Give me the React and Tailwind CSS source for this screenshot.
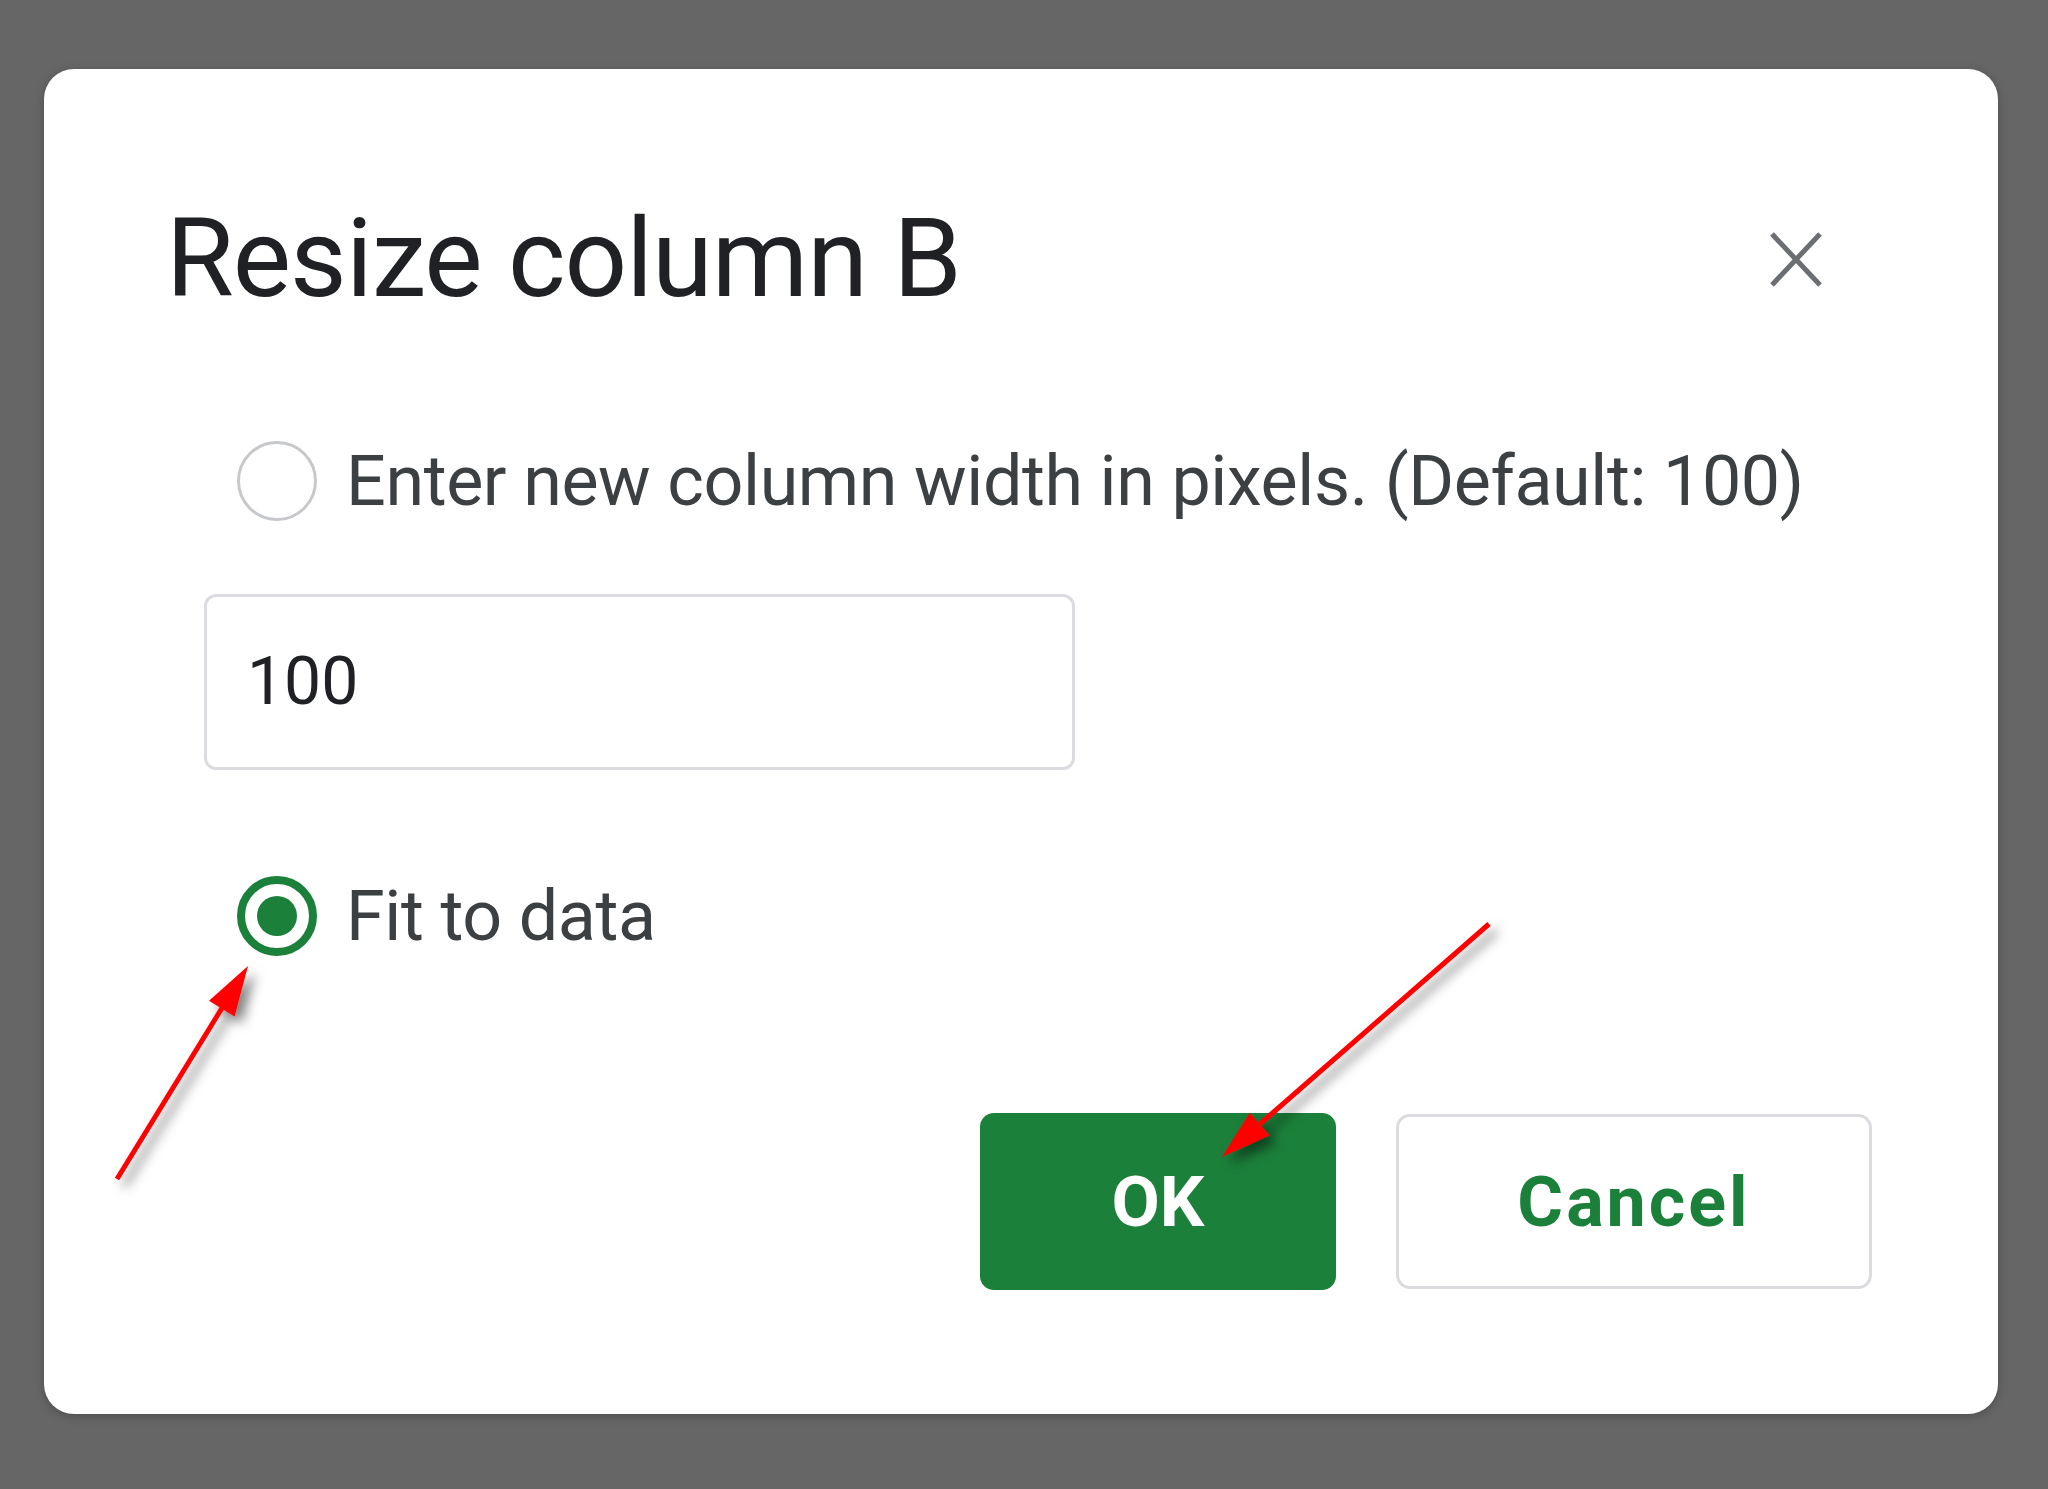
import React from "react";

function Arrows() {
  return (
    <svg
      className="absolute left-0 top-0 pointer-events-none"
      width="2048"
      height="1489"
      viewBox="0 0 2048 1489"
    >
      <defs>
        <filter id="sh" x="-20%" y="-20%" width="140%" height="140%">
          <feDropShadow dx="7" dy="7" stdDeviation="6" floodColor="#000" floodOpacity="0.5" />
        </filter>
      </defs>
      <g filter="url(#sh)">
        <line x1="117" y1="1179" x2="222" y2="1008" stroke="#ff0000" strokeWidth="5" />
        <polygon points="248,966 234.6,1016.5 209,1000.7" fill="#ff0000" />
        <line x1="1489" y1="924" x2="1260" y2="1124" stroke="#ff0000" strokeWidth="5" />
        <polygon points="1222,1157 1249.8,1112.8 1269.6,1135.4" fill="#ff0000" />
      </g>
    </svg>
  );
}

export default function App() {
  return (
    <div
      className="relative w-[2048px] h-[1489px] bg-[#666666] pt-[69px] pl-[44px] overflow-hidden"
      style={{ fontFamily: "Roboto, 'Liberation Sans', sans-serif" }}
    >
      <div className="w-[1954px] h-[1345px] bg-white rounded-[30px] flex flex-col pt-[135px] shadow-[0_2px_10px_rgba(0,0,0,0.25)]">
        {/* Title row */}
        <div className="h-[110px] pl-[122px] pr-[175px] flex items-center justify-between">
          <div className="text-[110px] leading-[110px] text-[#202124] tracking-[-1px]">
            Resize column B
          </div>
          <svg width="54" height="57" viewBox="0 0 54 57">
            <line x1="3" y1="3" x2="51" y2="54" stroke="#6b6e72" strokeWidth="5" />
            <line x1="51" y1="3" x2="3" y2="54" stroke="#6b6e72" strokeWidth="5" />
          </svg>
        </div>

        {/* Option 1 */}
        <div className="mt-[127px] h-[80px] pl-[193px] flex items-center gap-[29px]">
          <div className="w-[80px] h-[80px] rounded-full border-[3px] border-[#c6c8cc] bg-white shrink-0" />
          <div className="text-[70px] leading-[80px] text-[#3c4043] whitespace-nowrap tracking-[-0.4px]">
            Enter new column width in pixels. (Default: 100)
          </div>
        </div>

        {/* Input */}
        <div className="mt-[73px] ml-[160px] w-[871px] h-[176px] border-[3px] border-[#dadce0] rounded-[12px] flex items-center pl-[40px]">
          <span className="text-[66px] leading-[80px] text-[#202124]">100</span>
        </div>

        {/* Option 2 */}
        <div className="mt-[106px] h-[80px] pl-[193px] flex items-center gap-[29px]">
          <div className="w-[80px] h-[80px] rounded-full border-[8px] border-[#1b803a] bg-white shrink-0 flex items-center justify-center">
            <div className="w-[40px] h-[40px] rounded-full bg-[#1b803a]" />
          </div>
          <div className="text-[70px] leading-[80px] text-[#3c4043] whitespace-nowrap tracking-[-0.4px]">
            Fit to data
          </div>
        </div>

        {/* Buttons */}
        <div className="mt-[157px] flex justify-end items-center gap-[60px] pr-[126px]">
          <div className="w-[356px] h-[177px] rounded-[14px] bg-[#1b803a] flex items-center justify-center">
            <span className="text-[70px] font-bold text-white leading-none">OK</span>
          </div>
          <div className="w-[476px] h-[175px] rounded-[14px] border-[3px] border-[#dadce0] bg-white flex items-center justify-center">
            <span className="text-[70px] font-bold text-[#1b803a] leading-none tracking-[3px]">Cancel</span>
          </div>
        </div>
      </div>
      <Arrows />
    </div>
  );
}
